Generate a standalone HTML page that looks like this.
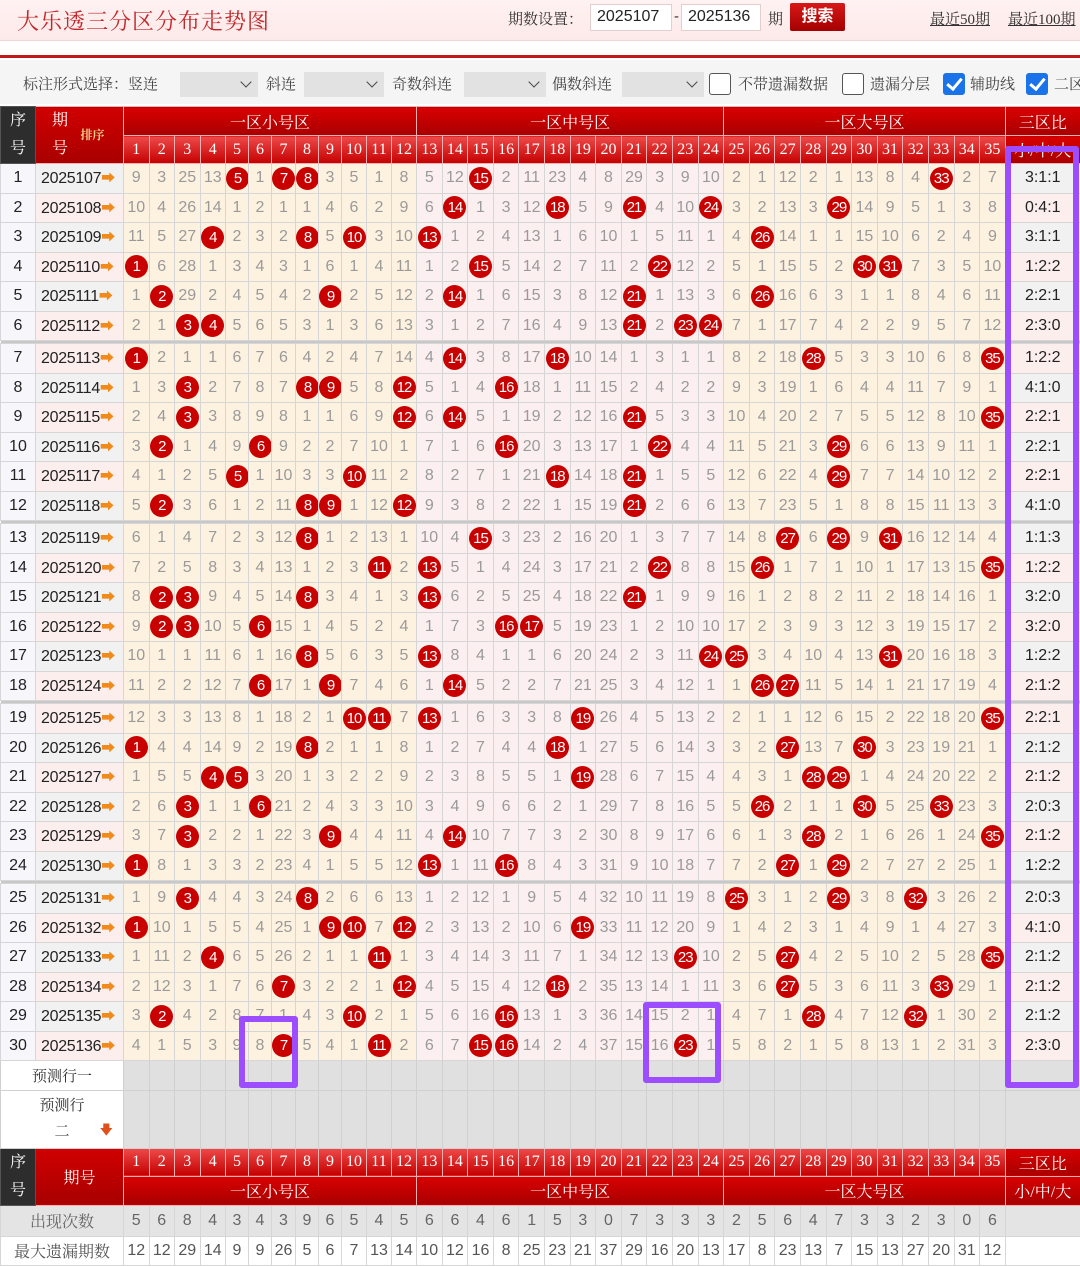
<!DOCTYPE html>
<html><head><meta charset="utf-8">
<style>
*{margin:0;padding:0;box-sizing:border-box}
body{width:1080px;height:1259px;overflow:hidden;background:#fff;font-family:"Liberation Sans","Noto Sans CJK SC",sans-serif;position:relative}
.serif{font-family:"Liberation Serif","Noto Serif CJK SC",serif}
.top{position:absolute;left:0;top:0;width:1080px;height:41px;background:linear-gradient(#fff2f2,#fde9e9);border-bottom:1px solid #f0d6d6}
.title{position:absolute;left:17px;top:5px;font-size:22px;color:#c0282a;letter-spacing:1px}
.ab{position:absolute;font-size:15px;color:#333;white-space:nowrap}
.inp{position:absolute;top:4px;height:27px;border:1px solid #e4cfcf;background:#fff;font-size:16px;color:#222;padding:3px 0 0 6px}
.btn{position:absolute;left:790px;top:3px;width:55px;height:28px;background:linear-gradient(#d81818,#a40000);color:#fff;font-size:16px;font-weight:bold;text-align:center;line-height:27px;border-radius:2px}
.redline{position:absolute;left:0;top:55px;width:1080px;height:3px;background:#c21a1a}
.opt{position:absolute;left:0;top:60px;width:1080px;height:44px;background:#f5f5f5}
.sel{position:absolute;top:72px;height:25px;background:#e2e2e2}
.sel:after{content:"";position:absolute;right:8px;top:6px;width:7px;height:7px;border-right:1.5px solid #444;border-bottom:1.5px solid #444;transform:rotate(45deg)}
.cb{position:absolute;top:73px;width:22px;height:22px;border:1.5px solid #555;border-radius:3px;background:#fff}
.cb.on{background:#1a73e8;border-color:#1a73e8}
.cb.on:after{content:"";position:absolute;left:6px;top:1px;width:6px;height:12px;border-right:3px solid #fff;border-bottom:3px solid #fff;transform:rotate(40deg)}
table{position:absolute;left:0;top:106px;border-collapse:collapse;table-layout:fixed;width:1080px}
td{border:1px solid #d6d6d6;text-align:center;padding:0;height:29.5px;font-size:16px;color:#9a9a9a;white-space:nowrap;overflow:hidden}
th{padding:0;font-weight:normal;color:#fff;text-align:center;border:1px solid #f3b0b0}
.hz{background:linear-gradient(#d90000,#a80000);font-size:16px;height:29px}
.hn th{background:linear-gradient(#ee4a4a,#c40000);font-size:16px;height:28px}
.hs{background:#2d2d2d;border-color:#555}
.hq{background:linear-gradient(#d00000,#a80000)}
tbody.d td:nth-child(1){background:#f7f7fb;color:#222}
tbody.d td:nth-child(2){background:#f1f1f1;color:#222;text-align:left;padding-left:5px;letter-spacing:-.3px}
tbody.d tr:nth-child(even) td:nth-child(2){background:#fdeeee}
tbody.d td:nth-child(n+3){background:#fdf1e0}
tbody.d td:nth-child(n+15){background:#fcefef}
tbody.d td:nth-child(n+27){background:#fdf1e0}
tbody.d td:nth-child(38){background:#f1f1f1;color:#222}
tbody.d tr:nth-child(even) td:nth-child(38){background:#fdeeee}
tbody.d tr.sp td{height:3px;background:#c8c8c8!important;border:none}
i{font-style:normal;color:#f08a1a;font-size:14px;font-weight:bold}
b{display:inline-block;width:23px;height:23px;line-height:23px;border-radius:50%;background:#c80000;color:#fff;font-weight:normal;font-size:15px;letter-spacing:-1px;vertical-align:middle}
.pr td{background:#e0e0e0;border-color:#d0d0d0}
.pr td.lb{background:#fff;color:#333;font-size:15px}
.pr td.rt{background:#e6e6f4}
.f1 td{background:#e4e4e4;color:#666}
.f2 td{background:#fff;color:#555}
.pb{position:absolute;border:6px solid #9c4dff;border-radius:3px}
</style></head><body>
<div class="top"><div class="title serif">大乐透三分区分布走势图</div>
<div class="ab serif" style="left:508px;top:8px">期数设置：</div>
<div class="inp" style="left:590px;width:82px">2025107</div>
<div class="ab" style="left:674px;top:8px">-</div>
<div class="inp" style="left:681px;width:80px">2025136</div>
<div class="ab serif" style="left:768px;top:8px">期</div>
<div class="btn">搜索</div>
<div class="ab serif" style="left:930px;top:8px;text-decoration:underline">最近50期</div>
<div class="ab serif" style="left:1008px;top:8px;text-decoration:underline">最近100期</div>
</div>
<div class="redline"></div>
<div class="opt"></div>
<div class="ab serif" style="left:23px;top:73px;color:#444">标注形式选择：竖连</div>
<div class="sel" style="left:180px;width:78px"></div>
<div class="ab serif" style="left:266px;top:73px;color:#444">斜连</div>
<div class="sel" style="left:304px;width:80px"></div>
<div class="ab serif" style="left:392px;top:73px;color:#444">奇数斜连</div>
<div class="sel" style="left:464px;width:82px"></div>
<div class="ab serif" style="left:552px;top:73px;color:#444">偶数斜连</div>
<div class="sel" style="left:622px;width:82px"></div>
<div class="cb" style="left:709px"></div>
<div class="ab serif" style="left:738px;top:73px;color:#444">不带遗漏数据</div>
<div class="cb" style="left:842px"></div>
<div class="ab serif" style="left:870px;top:73px;color:#444">遗漏分层</div>
<div class="cb on" style="left:943px"></div>
<div class="ab serif" style="left:970px;top:73px;color:#444">辅助线</div>
<div class="cb on" style="left:1026px"></div>
<div class="ab serif" style="left:1054px;top:73px;color:#444">二区</div>

<table>
<colgroup><col style="width:35px"><col style="width:88px"><col span="4" style="width:25.5px"><col span="2" style="width:23px"><col style="width:24px"><col span="2" style="width:23px"><col span="3" style="width:25px"><col span="23" style="width:25.6px"><col style="width:75px"></colgroup>
<thead class="serif">
<tr><th rowspan="2" class="hs" style="font-size:16px;line-height:28px">序<br>号</th><th rowspan="2" class="hq" style="font-size:16px;line-height:28px;text-align:left;padding-left:16px">期<br>号<span style="position:absolute;left:80px;top:14px;font-size:12px;color:#f6d08a;font-weight:bold">排序</span></th><th colspan="12" class="hz">一区小号区</th><th colspan="12" class="hz">一区中号区</th><th colspan="11" class="hz">一区大号区</th><th class="hz">三区比</th></tr>
<tr class="hn"><th>1</th><th>2</th><th>3</th><th>4</th><th>5</th><th>6</th><th>7</th><th>8</th><th>9</th><th>10</th><th>11</th><th>12</th><th>13</th><th>14</th><th>15</th><th>16</th><th>17</th><th>18</th><th>19</th><th>20</th><th>21</th><th>22</th><th>23</th><th>24</th><th>25</th><th>26</th><th>27</th><th>28</th><th>29</th><th>30</th><th>31</th><th>32</th><th>33</th><th>34</th><th>35</th><th style="background:linear-gradient(#d90000,#a80000)">小/中/大</th></tr>
</thead>
<tbody class="d">
<tr><td>1<td>2025107<i>➡</i><td>9<td>3<td>25<td>13<td><b>5</b><td>1<td><b>7</b><td><b>8</b><td>3<td>5<td>1<td>8<td>5<td>12<td><b>15</b><td>2<td>11<td>23<td>4<td>8<td>29<td>3<td>9<td>10<td>2<td>1<td>12<td>2<td>1<td>13<td>8<td>4<td><b>33</b><td>2<td>7<td>3:1:1</tr>
<tr><td>2<td>2025108<i>➡</i><td>10<td>4<td>26<td>14<td>1<td>2<td>1<td>1<td>4<td>6<td>2<td>9<td>6<td><b>14</b><td>1<td>3<td>12<td><b>18</b><td>5<td>9<td><b>21</b><td>4<td>10<td><b>24</b><td>3<td>2<td>13<td>3<td><b>29</b><td>14<td>9<td>5<td>1<td>3<td>8<td>0:4:1</tr>
<tr><td>3<td>2025109<i>➡</i><td>11<td>5<td>27<td><b>4</b><td>2<td>3<td>2<td><b>8</b><td>5<td><b>10</b><td>3<td>10<td><b>13</b><td>1<td>2<td>4<td>13<td>1<td>6<td>10<td>1<td>5<td>11<td>1<td>4<td><b>26</b><td>14<td>1<td>1<td>15<td>10<td>6<td>2<td>4<td>9<td>3:1:1</tr>
<tr><td>4<td>2025110<i>➡</i><td><b>1</b><td>6<td>28<td>1<td>3<td>4<td>3<td>1<td>6<td>1<td>4<td>11<td>1<td>2<td><b>15</b><td>5<td>14<td>2<td>7<td>11<td>2<td><b>22</b><td>12<td>2<td>5<td>1<td>15<td>5<td>2<td><b>30</b><td><b>31</b><td>7<td>3<td>5<td>10<td>1:2:2</tr>
<tr><td>5<td>2025111<i>➡</i><td>1<td><b>2</b><td>29<td>2<td>4<td>5<td>4<td>2<td><b>9</b><td>2<td>5<td>12<td>2<td><b>14</b><td>1<td>6<td>15<td>3<td>8<td>12<td><b>21</b><td>1<td>13<td>3<td>6<td><b>26</b><td>16<td>6<td>3<td>1<td>1<td>8<td>4<td>6<td>11<td>2:2:1</tr>
<tr><td>6<td>2025112<i>➡</i><td>2<td>1<td><b>3</b><td><b>4</b><td>5<td>6<td>5<td>3<td>1<td>3<td>6<td>13<td>3<td>1<td>2<td>7<td>16<td>4<td>9<td>13<td><b>21</b><td>2<td><b>23</b><td><b>24</b><td>7<td>1<td>17<td>7<td>4<td>2<td>2<td>9<td>5<td>7<td>12<td>2:3:0</tr>
<tr class="sp"><td colspan="38"></td></tr>
<tr><td>7<td>2025113<i>➡</i><td><b>1</b><td>2<td>1<td>1<td>6<td>7<td>6<td>4<td>2<td>4<td>7<td>14<td>4<td><b>14</b><td>3<td>8<td>17<td><b>18</b><td>10<td>14<td>1<td>3<td>1<td>1<td>8<td>2<td>18<td><b>28</b><td>5<td>3<td>3<td>10<td>6<td>8<td><b>35</b><td>1:2:2</tr>
<tr><td>8<td>2025114<i>➡</i><td>1<td>3<td><b>3</b><td>2<td>7<td>8<td>7<td><b>8</b><td><b>9</b><td>5<td>8<td><b>12</b><td>5<td>1<td>4<td><b>16</b><td>18<td>1<td>11<td>15<td>2<td>4<td>2<td>2<td>9<td>3<td>19<td>1<td>6<td>4<td>4<td>11<td>7<td>9<td>1<td>4:1:0</tr>
<tr><td>9<td>2025115<i>➡</i><td>2<td>4<td><b>3</b><td>3<td>8<td>9<td>8<td>1<td>1<td>6<td>9<td><b>12</b><td>6<td><b>14</b><td>5<td>1<td>19<td>2<td>12<td>16<td><b>21</b><td>5<td>3<td>3<td>10<td>4<td>20<td>2<td>7<td>5<td>5<td>12<td>8<td>10<td><b>35</b><td>2:2:1</tr>
<tr><td>10<td>2025116<i>➡</i><td>3<td><b>2</b><td>1<td>4<td>9<td><b>6</b><td>9<td>2<td>2<td>7<td>10<td>1<td>7<td>1<td>6<td><b>16</b><td>20<td>3<td>13<td>17<td>1<td><b>22</b><td>4<td>4<td>11<td>5<td>21<td>3<td><b>29</b><td>6<td>6<td>13<td>9<td>11<td>1<td>2:2:1</tr>
<tr><td>11<td>2025117<i>➡</i><td>4<td>1<td>2<td>5<td><b>5</b><td>1<td>10<td>3<td>3<td><b>10</b><td>11<td>2<td>8<td>2<td>7<td>1<td>21<td><b>18</b><td>14<td>18<td><b>21</b><td>1<td>5<td>5<td>12<td>6<td>22<td>4<td><b>29</b><td>7<td>7<td>14<td>10<td>12<td>2<td>2:2:1</tr>
<tr><td>12<td>2025118<i>➡</i><td>5<td><b>2</b><td>3<td>6<td>1<td>2<td>11<td><b>8</b><td><b>9</b><td>1<td>12<td><b>12</b><td>9<td>3<td>8<td>2<td>22<td>1<td>15<td>19<td><b>21</b><td>2<td>6<td>6<td>13<td>7<td>23<td>5<td>1<td>8<td>8<td>15<td>11<td>13<td>3<td>4:1:0</tr>
<tr class="sp"><td colspan="38"></td></tr>
<tr><td>13<td>2025119<i>➡</i><td>6<td>1<td>4<td>7<td>2<td>3<td>12<td><b>8</b><td>1<td>2<td>13<td>1<td>10<td>4<td><b>15</b><td>3<td>23<td>2<td>16<td>20<td>1<td>3<td>7<td>7<td>14<td>8<td><b>27</b><td>6<td><b>29</b><td>9<td><b>31</b><td>16<td>12<td>14<td>4<td>1:1:3</tr>
<tr><td>14<td>2025120<i>➡</i><td>7<td>2<td>5<td>8<td>3<td>4<td>13<td>1<td>2<td>3<td><b>11</b><td>2<td><b>13</b><td>5<td>1<td>4<td>24<td>3<td>17<td>21<td>2<td><b>22</b><td>8<td>8<td>15<td><b>26</b><td>1<td>7<td>1<td>10<td>1<td>17<td>13<td>15<td><b>35</b><td>1:2:2</tr>
<tr><td>15<td>2025121<i>➡</i><td>8<td><b>2</b><td><b>3</b><td>9<td>4<td>5<td>14<td><b>8</b><td>3<td>4<td>1<td>3<td><b>13</b><td>6<td>2<td>5<td>25<td>4<td>18<td>22<td><b>21</b><td>1<td>9<td>9<td>16<td>1<td>2<td>8<td>2<td>11<td>2<td>18<td>14<td>16<td>1<td>3:2:0</tr>
<tr><td>16<td>2025122<i>➡</i><td>9<td><b>2</b><td><b>3</b><td>10<td>5<td><b>6</b><td>15<td>1<td>4<td>5<td>2<td>4<td>1<td>7<td>3<td><b>16</b><td><b>17</b><td>5<td>19<td>23<td>1<td>2<td>10<td>10<td>17<td>2<td>3<td>9<td>3<td>12<td>3<td>19<td>15<td>17<td>2<td>3:2:0</tr>
<tr><td>17<td>2025123<i>➡</i><td>10<td>1<td>1<td>11<td>6<td>1<td>16<td><b>8</b><td>5<td>6<td>3<td>5<td><b>13</b><td>8<td>4<td>1<td>1<td>6<td>20<td>24<td>2<td>3<td>11<td><b>24</b><td><b>25</b><td>3<td>4<td>10<td>4<td>13<td><b>31</b><td>20<td>16<td>18<td>3<td>1:2:2</tr>
<tr><td>18<td>2025124<i>➡</i><td>11<td>2<td>2<td>12<td>7<td><b>6</b><td>17<td>1<td><b>9</b><td>7<td>4<td>6<td>1<td><b>14</b><td>5<td>2<td>2<td>7<td>21<td>25<td>3<td>4<td>12<td>1<td>1<td><b>26</b><td><b>27</b><td>11<td>5<td>14<td>1<td>21<td>17<td>19<td>4<td>2:1:2</tr>
<tr class="sp"><td colspan="38"></td></tr>
<tr><td>19<td>2025125<i>➡</i><td>12<td>3<td>3<td>13<td>8<td>1<td>18<td>2<td>1<td><b>10</b><td><b>11</b><td>7<td><b>13</b><td>1<td>6<td>3<td>3<td>8<td><b>19</b><td>26<td>4<td>5<td>13<td>2<td>2<td>1<td>1<td>12<td>6<td>15<td>2<td>22<td>18<td>20<td><b>35</b><td>2:2:1</tr>
<tr><td>20<td>2025126<i>➡</i><td><b>1</b><td>4<td>4<td>14<td>9<td>2<td>19<td><b>8</b><td>2<td>1<td>1<td>8<td>1<td>2<td>7<td>4<td>4<td><b>18</b><td>1<td>27<td>5<td>6<td>14<td>3<td>3<td>2<td><b>27</b><td>13<td>7<td><b>30</b><td>3<td>23<td>19<td>21<td>1<td>2:1:2</tr>
<tr><td>21<td>2025127<i>➡</i><td>1<td>5<td>5<td><b>4</b><td><b>5</b><td>3<td>20<td>1<td>3<td>2<td>2<td>9<td>2<td>3<td>8<td>5<td>5<td>1<td><b>19</b><td>28<td>6<td>7<td>15<td>4<td>4<td>3<td>1<td><b>28</b><td><b>29</b><td>1<td>4<td>24<td>20<td>22<td>2<td>2:1:2</tr>
<tr><td>22<td>2025128<i>➡</i><td>2<td>6<td><b>3</b><td>1<td>1<td><b>6</b><td>21<td>2<td>4<td>3<td>3<td>10<td>3<td>4<td>9<td>6<td>6<td>2<td>1<td>29<td>7<td>8<td>16<td>5<td>5<td><b>26</b><td>2<td>1<td>1<td><b>30</b><td>5<td>25<td><b>33</b><td>23<td>3<td>2:0:3</tr>
<tr><td>23<td>2025129<i>➡</i><td>3<td>7<td><b>3</b><td>2<td>2<td>1<td>22<td>3<td><b>9</b><td>4<td>4<td>11<td>4<td><b>14</b><td>10<td>7<td>7<td>3<td>2<td>30<td>8<td>9<td>17<td>6<td>6<td>1<td>3<td><b>28</b><td>2<td>1<td>6<td>26<td>1<td>24<td><b>35</b><td>2:1:2</tr>
<tr><td>24<td>2025130<i>➡</i><td><b>1</b><td>8<td>1<td>3<td>3<td>2<td>23<td>4<td>1<td>5<td>5<td>12<td><b>13</b><td>1<td>11<td><b>16</b><td>8<td>4<td>3<td>31<td>9<td>10<td>18<td>7<td>7<td>2<td><b>27</b><td>1<td><b>29</b><td>2<td>7<td>27<td>2<td>25<td>1<td>1:2:2</tr>
<tr class="sp"><td colspan="38"></td></tr>
<tr><td>25<td>2025131<i>➡</i><td>1<td>9<td><b>3</b><td>4<td>4<td>3<td>24<td><b>8</b><td>2<td>6<td>6<td>13<td>1<td>2<td>12<td>1<td>9<td>5<td>4<td>32<td>10<td>11<td>19<td>8<td><b>25</b><td>3<td>1<td>2<td><b>29</b><td>3<td>8<td><b>32</b><td>3<td>26<td>2<td>2:0:3</tr>
<tr><td>26<td>2025132<i>➡</i><td><b>1</b><td>10<td>1<td>5<td>5<td>4<td>25<td>1<td><b>9</b><td><b>10</b><td>7<td><b>12</b><td>2<td>3<td>13<td>2<td>10<td>6<td><b>19</b><td>33<td>11<td>12<td>20<td>9<td>1<td>4<td>2<td>3<td>1<td>4<td>9<td>1<td>4<td>27<td>3<td>4:1:0</tr>
<tr><td>27<td>2025133<i>➡</i><td>1<td>11<td>2<td><b>4</b><td>6<td>5<td>26<td>2<td>1<td>1<td><b>11</b><td>1<td>3<td>4<td>14<td>3<td>11<td>7<td>1<td>34<td>12<td>13<td><b>23</b><td>10<td>2<td>5<td><b>27</b><td>4<td>2<td>5<td>10<td>2<td>5<td>28<td><b>35</b><td>2:1:2</tr>
<tr><td>28<td>2025134<i>➡</i><td>2<td>12<td>3<td>1<td>7<td>6<td><b>7</b><td>3<td>2<td>2<td>1<td><b>12</b><td>4<td>5<td>15<td>4<td>12<td><b>18</b><td>2<td>35<td>13<td>14<td>1<td>11<td>3<td>6<td><b>27</b><td>5<td>3<td>6<td>11<td>3<td><b>33</b><td>29<td>1<td>2:1:2</tr>
<tr><td>29<td>2025135<i>➡</i><td>3<td><b>2</b><td>4<td>2<td>8<td>7<td>1<td>4<td>3<td><b>10</b><td>2<td>1<td>5<td>6<td>16<td><b>16</b><td>13<td>1<td>3<td>36<td>14<td>15<td>2<td>1<td>4<td>7<td>1<td><b>28</b><td>4<td>7<td>12<td><b>32</b><td>1<td>30<td>2<td>2:1:2</tr>
<tr><td>30<td>2025136<i>➡</i><td>4<td>1<td>5<td>3<td>9<td>8<td><b>7</b><td>5<td>4<td>1<td><b>11</b><td>2<td>6<td>7<td><b>15</b><td><b>16</b><td>14<td>2<td>4<td>37<td>15<td>16<td><b>23</b><td>1<td>5<td>8<td>2<td>1<td>5<td>8<td>13<td>1<td>2<td>31<td>3<td>2:3:0</tr>
</tbody>
<tbody class="pr serif">
<tr><td colspan="2" class="lb">预测行一<td><td><td><td><td><td><td><td><td><td><td><td><td><td><td><td><td><td><td><td><td><td><td><td><td><td><td><td><td><td><td><td><td><td><td><td><td><td><td class="rt"></tr>
<tr><td colspan="2" class="lb" style="height:58px;line-height:26px;position:relative">预测行<br>二<span style="position:absolute;right:10px;top:26px;color:#e0501a;font-size:13px">🡇</span><td><td><td><td><td><td><td><td><td><td><td><td><td><td><td><td><td><td><td><td><td><td><td><td><td><td><td><td><td><td><td><td><td><td><td><td><td><td><td class="rt"></tr>
</tbody>
<tbody class="serif">
<tr class="hn"><th rowspan="2" class="hs" style="background:#2d2d2d;font-size:16px;line-height:28px">序<br>号</th><th rowspan="2" style="background:linear-gradient(#d00000,#a80000);font-size:16px">期号</th><th>1</th><th>2</th><th>3</th><th>4</th><th>5</th><th>6</th><th>7</th><th>8</th><th>9</th><th>10</th><th>11</th><th>12</th><th>13</th><th>14</th><th>15</th><th>16</th><th>17</th><th>18</th><th>19</th><th>20</th><th>21</th><th>22</th><th>23</th><th>24</th><th>25</th><th>26</th><th>27</th><th>28</th><th>29</th><th>30</th><th>31</th><th>32</th><th>33</th><th>34</th><th>35</th><th style="background:linear-gradient(#d90000,#a80000)">三区比</th></tr>
<tr><th colspan="12" class="hz">一区小号区</th><th colspan="12" class="hz">一区中号区</th><th colspan="11" class="hz">一区大号区</th><th class="hz">小/中/大</th></tr>
</tbody>
<tbody>
<tr class="f1"><td colspan="2" class="serif" style="height:31px">出现次数<td>5<td>6<td>8<td>4<td>3<td>4<td>3<td>9<td>6<td>5<td>4<td>5<td>6<td>6<td>4<td>6<td>1<td>5<td>3<td>0<td>7<td>3<td>3<td>3<td>2<td>5<td>6<td>4<td>7<td>3<td>3<td>2<td>3<td>0<td>6<td></tr>
<tr class="f2"><td colspan="2" class="serif">最大遗漏期数<td>12<td>12<td>29<td>14<td>9<td>9<td>26<td>5<td>6<td>7<td>13<td>14<td>10<td>12<td>16<td>8<td>25<td>23<td>21<td>37<td>29<td>16<td>20<td>13<td>17<td>8<td>23<td>13<td>7<td>15<td>13<td>27<td>20<td>31<td>12<td></tr>
</tbody>
</table>
<div class="pb" style="left:1005px;top:146px;width:74px;height:942px"></div>
<div class="pb" style="left:239px;top:1016px;width:59px;height:72px"></div>
<div class="pb" style="left:643px;top:1002px;width:78px;height:81px"></div>
</body></html>
